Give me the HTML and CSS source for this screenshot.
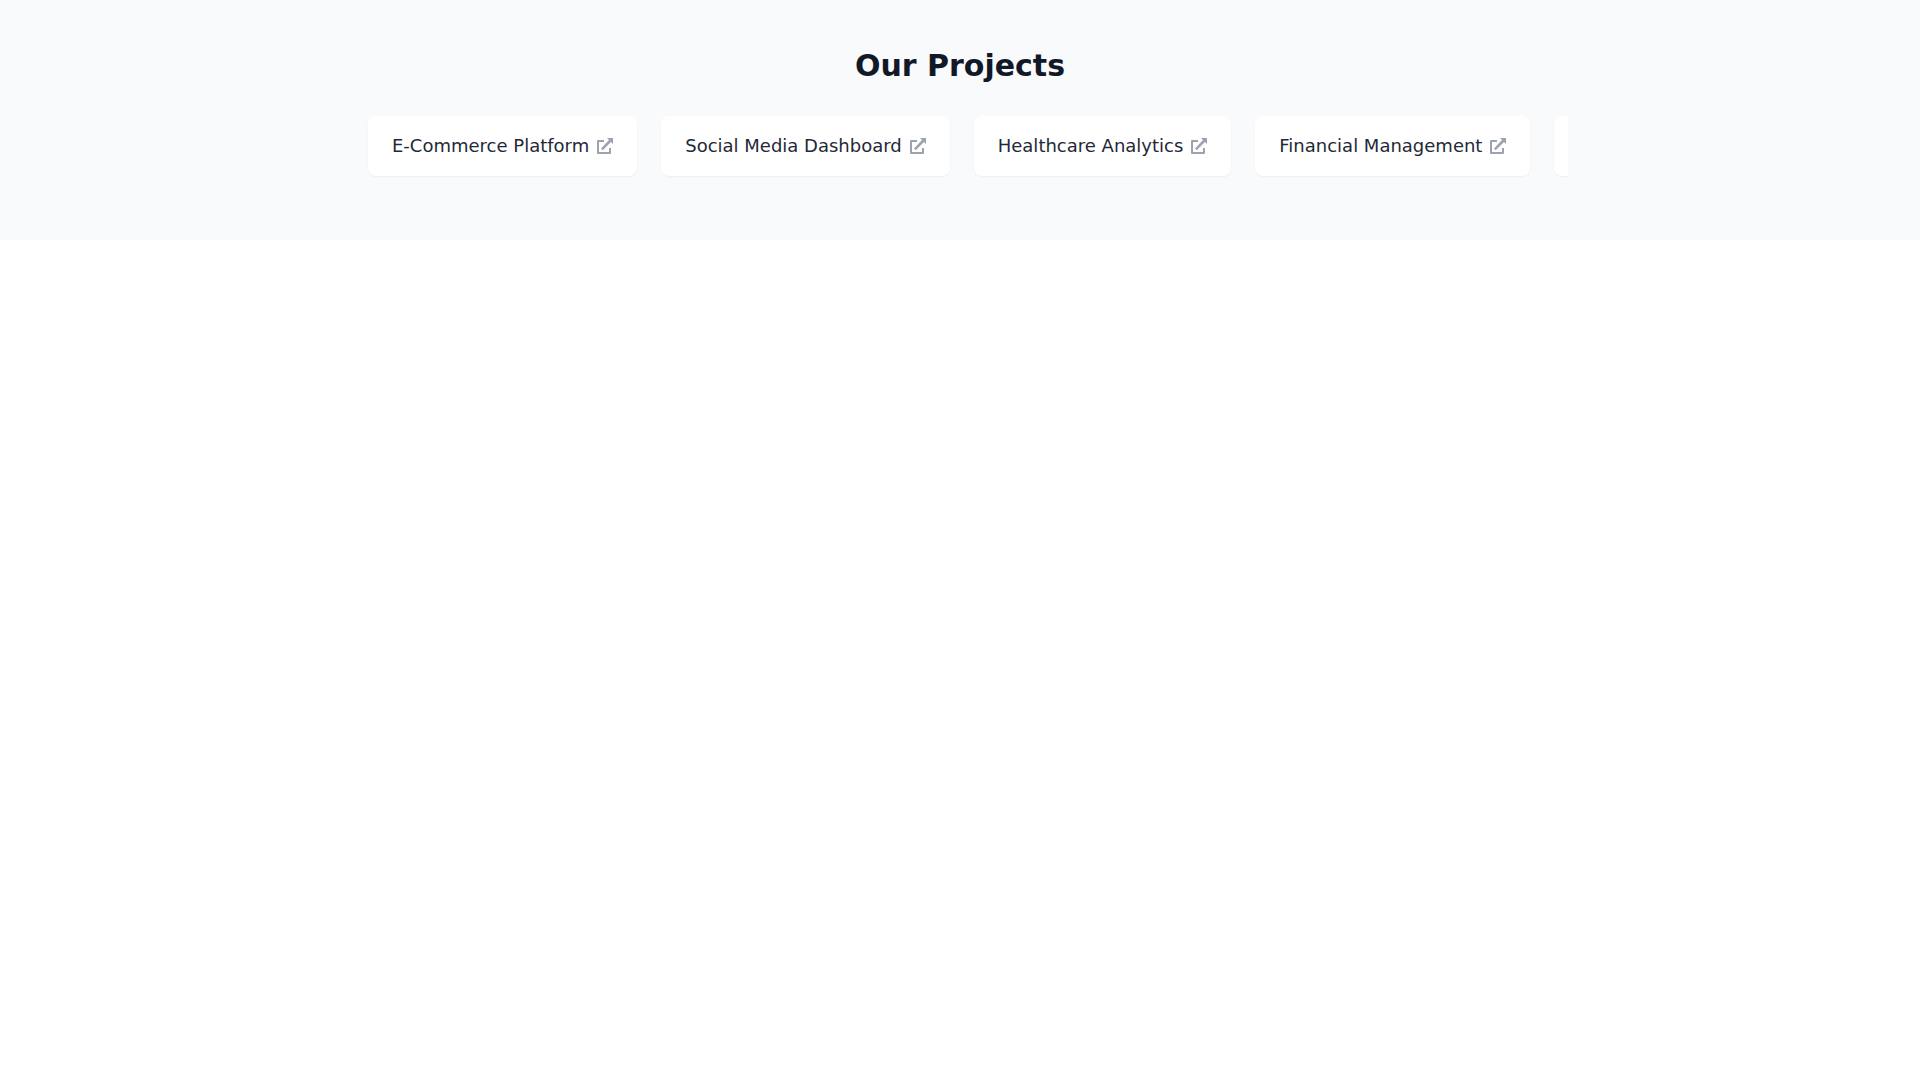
FILE: index.html
```html
<!DOCTYPE html>
<html lang="en">
<head>
<meta charset="utf-8">
<meta name="viewport" content="width=device-width, initial-scale=1">
<title>Our Projects</title>
<link rel="stylesheet" href="styles.css">
</head>
<body>
<svg class="sprite" aria-hidden="true">
  <symbol id="external" viewBox="0 0 16 16">
    <path d="M7 2v2H2v10h10v-4h2v5a1 1 0 0 1-1 1H1a1 1 0 0 1-1-1V3a1 1 0 0 1 1-1zM10 0h6v6l-2-2-8.300 8.300-1.700-1.700L12 2z"/>
  </symbol>
</svg>
<section class="projects">
  <h2 class="title">Our Projects</h2>
  <div class="track">
    <a class="card" href="#ecommerce">E-Commerce Platform<svg class="icon" aria-hidden="true"><use href="#external"/></svg></a>
    <a class="card" href="#social">Social Media Dashboard<svg class="icon" aria-hidden="true"><use href="#external"/></svg></a>
    <a class="card" href="#healthcare">Healthcare Analytics<svg class="icon" aria-hidden="true"><use href="#external"/></svg></a>
    <a class="card" href="#financial">Financial Management<svg class="icon" aria-hidden="true"><use href="#external"/></svg></a>
    <a class="card" href="#more" aria-label="Next project"></a>
  </div>
</section>
</body>
</html>
```
FILE: styles.css
```css
body {
  margin: 0;
  background: #fff;
  font-family: "DejaVu Sans", sans-serif;
}

.sprite {
  position: absolute;
  width: 0;
  height: 0;
}

.projects {
  padding: 48px 16px;
  background: #f9fafc;
}

.title {
  margin: 0 0 32px;
  color: #111827;
  font-size: 30px;
  line-height: 36px;
  text-align: center;
}

.track {
  display: flex;
  gap: 24px;
  box-sizing: border-box;
  max-width: 1216px;
  margin: 0 auto;
  padding: 0 0 16px 16px;
  overflow: hidden;
}

.card {
  display: flex;
  flex: none;
  align-items: center;
  gap: 8px;
  padding: 16px 24px;
  border-radius: 8px;
  background: #fff;
  box-shadow: 0 1px 2px rgb(0 0 0 / 5%);
  color: #1f2937;
  font-size: 18px;
  line-height: 28px;
  text-decoration: none;
  white-space: nowrap;
}

.icon {
  width: 16px;
  height: 16px;
  fill: #9ca3af;
}
```
